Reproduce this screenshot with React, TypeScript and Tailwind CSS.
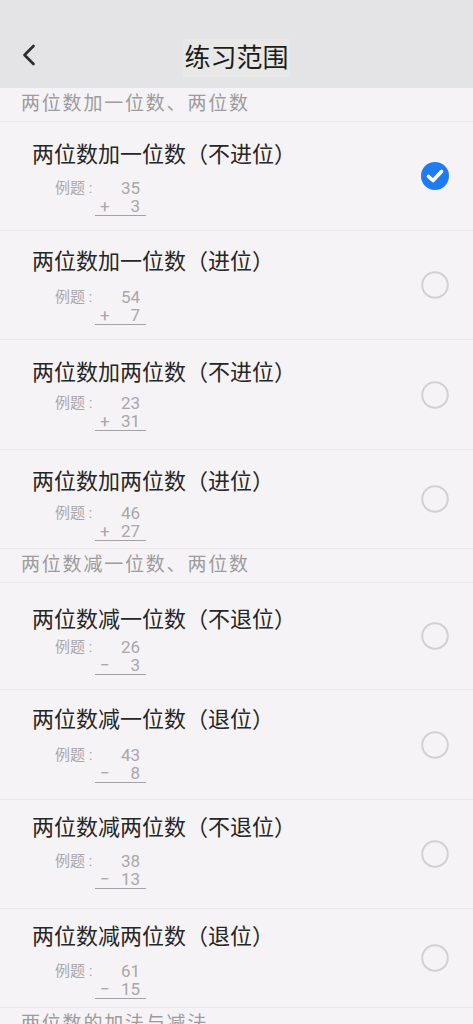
import { ChevronLeft } from "lucide-react";

interface PracticeItem {
    title: string;
    top: string;
    bottom: string;
    op: string;
    // per-row spacing classes, tuned to the screen
    pt: string;
    mt: string;
    h: string;
}

interface Section {
    name: string;
    items: PracticeItem[];
}

const sections: Section[] = [
    {
        name: "两位数加一位数、两位数",
        items: [
            { title: "两位数加一位数（不进位）", top: "35", bottom: "3", op: "+", pt: "pt-[20px]", mt: "mt-[11px]", h: "h-[109px]" },
            { title: "两位数加一位数（进位）", top: "54", bottom: "7", op: "+", pt: "pt-[18px]", mt: "mt-[13px]", h: "h-[109px]" },
            { title: "两位数加两位数（不进位）", top: "23", bottom: "31", op: "+", pt: "pt-[20px]", mt: "mt-[8px]", h: "h-[110px]" },
            { title: "两位数加两位数（进位）", top: "46", bottom: "27", op: "+", pt: "pt-[19px]", mt: "mt-[9px]", h: "h-[99px]" },
        ],
    },
    {
        name: "两位数减一位数、两位数",
        items: [
            { title: "两位数减一位数（不退位）", top: "26", bottom: "3", op: "−", pt: "pt-[24px]", mt: "mt-[5px]", h: "h-[107px]" },
            { title: "两位数减一位数（退位）", top: "43", bottom: "8", op: "−", pt: "pt-[17px]", mt: "mt-[13px]", h: "h-[110px]" },
            { title: "两位数减两位数（不退位）", top: "38", bottom: "13", op: "−", pt: "pt-[15px]", mt: "mt-[11px]", h: "h-[109px]" },
            { title: "两位数减两位数（退位）", top: "61", bottom: "15", op: "−", pt: "pt-[15px]", mt: "mt-[12px]", h: "h-[99px]" },
        ],
    },
    {
        name: "两位数的加法与减法",
        items: [],
    },
];

const FONT = "font-['Roboto','Noto_Sans_CJK_SC',sans-serif]";

function Radio({ checked }: { checked: boolean }) {
    if (checked) {
        return (
            <svg width="28" height="28" viewBox="0 0 28 28">
                <circle cx="14" cy="14" r="14" fill="#1f7bf4" />
                <path d="M7.5 14.5 L12 18.5 L20.5 9.5" fill="none" stroke="#fff" strokeWidth="3.6" strokeLinecap="round" strokeLinejoin="round" />
            </svg>
        );
    }
    return (
        <svg width="28" height="28" viewBox="0 0 28 28">
            <circle cx="14" cy="14" r="12.8" fill="none" stroke="#d2d0d2" strokeWidth="2" />
        </svg>
    );
}

function Example({ item }: { item: PracticeItem }) {
    return (
        <div className={`${item.mt} flex pl-[55px] text-[#a9a7a9]`}>
            <div className="w-[40px] shrink-0 whitespace-nowrap h-[18px] leading-[18px] text-[15px]">例题 :</div>
            <div className="w-[51px] shrink-0 text-[17px] leading-[18px]">
                <div className="text-right pr-[6px]">{item.top}</div>
                <div className="flex justify-between pl-[5px] pr-[6px] border-b border-[#a3a1a3]">
                    <span>{item.op}</span>
                    <span>{item.bottom}</span>
                </div>
            </div>
        </div>
    );
}

export default function App() {
    return (
        <main className={`${FONT} w-[473px] h-[1024px] overflow-hidden bg-[#f6f3f6]`}>
            {/* Top bar */}
            <div className="h-[88px] bg-[#e4e3e5] relative flex items-end justify-center pb-[11px]">
                <ChevronLeft className="absolute left-[11px] top-[37px] text-[#2e2e2e]" size={36} strokeWidth={1.8} />
                <h1 className="bg-[#e8e8e6] px-[1px] h-[38px] leading-[38px] text-[26px] text-[#1c1c1c]">练习范围</h1>
            </div>

            {sections.map((section) => (
                <div key={section.name}>
                    <div className="h-[34px] border-b border-[#ebe8eb] pl-[21px] text-[19px] leading-[32px] tracking-[1.8px] text-[#9d9b9d]">
                        {section.name}
                    </div>
                    {section.items.map((item, i) => (
                        <div key={item.title} className={`${item.h} border-b border-[#ebe8eb] flex justify-between`}>
                            <div className={item.pt}>
                                <div className="pl-[32px] text-[22px] leading-[26px] text-[#262626]">{item.title}</div>
                                <Example item={item} />
                            </div>
                            <div className="flex items-center pr-[24px]">
                                <Radio checked={section.name.includes("加一位数") && i === 0} />
                            </div>
                        </div>
                    ))}
                </div>
            ))}
        </main>
    );
}
